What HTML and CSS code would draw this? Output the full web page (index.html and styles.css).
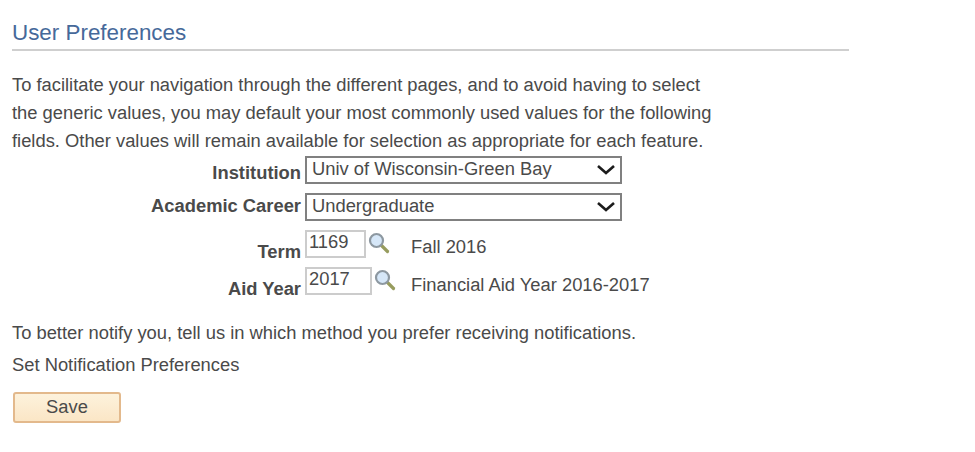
FILE: index.html
```html
<!DOCTYPE html>
<html lang="en">
<head>
<meta charset="utf-8">
<title>User Preferences</title>
<link rel="stylesheet" href="styles.css">
</head>
<body>
<main class="page">
  <h1 class="title">User Preferences</h1>
  <p class="intro">To facilitate your navigation through the different pages, and to avoid having to select<br>the generic values, you may default your most commonly used values for the following<br>fields. Other values will remain available for selection as appropriate for each feature.</p>
  <form class="form">
    <label class="label">Institution</label>
    <div class="select-wrap">
      <select class="select"><option>Univ of Wisconsin-Green Bay</option></select>
      <svg class="chevron" width="20" height="12" viewBox="0 0 20 12"><path d="M2 2l8 7 8-7" fill="none" stroke="#1c1c1c" stroke-width="2.600"/></svg>
    </div>
    <label class="label label-career">Academic Career</label>
    <div class="select-wrap">
      <select class="select"><option>Undergraduate</option></select>
      <svg class="chevron" width="20" height="12" viewBox="0 0 20 12"><path d="M2 2l8 7 8-7" fill="none" stroke="#1c1c1c" stroke-width="2.600"/></svg>
    </div>
    <label class="label label-low">Term</label>
    <div class="lookup">
      <div class="field">
        <input class="input input-term" value="1169">
        <svg class="mag" width="22" height="22" viewBox="0 0 22 22"><path d="M13.500 13.500l6 6" stroke="#979c5e" stroke-width="3.200" stroke-linecap="round"/><circle cx="8.500" cy="8.500" r="6.500" fill="#d6e7f8" stroke="#8d98a1" stroke-width="2.200"/></svg>
      </div>
      <span class="desc">Fall 2016</span>
    </div>
    <label class="label label-low">Aid Year</label>
    <div class="lookup">
      <div class="field">
        <input class="input input-aid" value="2017">
        <svg class="mag" width="22" height="22" viewBox="0 0 22 22"><path d="M13.500 13.500l6 6" stroke="#979c5e" stroke-width="3.200" stroke-linecap="round"/><circle cx="8.500" cy="8.500" r="6.500" fill="#d6e7f8" stroke="#8d98a1" stroke-width="2.200"/></svg>
      </div>
      <span class="desc">Financial Aid Year 2016-2017</span>
    </div>
  </form>
  <p class="note">To better notify you, tell us in which method you prefer receiving notifications.</p>
  <p class="link">Set Notification Preferences</p>
  <button class="save" type="button">Save</button>
</main>
</body>
</html>
```
FILE: styles.css
```css
* { box-sizing: border-box; }
html, body { margin: 0; background: #fff; }
body { font-family: "Liberation Sans", Arial, sans-serif; color: #4a4a4a; font-size: 18.35px; }
.page { padding: 19px 0 0 12px; height: 452px; overflow: hidden; }
.title {
  margin: 0; width: 837px; height: 32px; padding: 0;
  font-size: 22.4px; line-height: 28px; font-weight: 400; color: #46699a;
  border-bottom: 2px solid #cfcfcf;
}
.intro { margin: 20px 0 0; line-height: 28px; white-space: nowrap; }
.form {
  display: grid; grid-template-columns: 289px auto; justify-content: start;
  column-gap: 4px; margin-top: 1px;
}
.label { font-weight: 700; text-align: right; line-height: 28px; padding-top: 3px; white-space: nowrap; }
.label-career { padding-top: 0; line-height: 26px; }
.label-low { padding-top: 8px; }
.select-wrap { position: relative; width: 317px; height: 28px; margin-bottom: 9px; }
.select {
  appearance: none; width: 100%; height: 100%; padding: 0 0 3px 5px; margin: 0;
  border: 2px solid #808080; border-radius: 0; background: #fff;
  font: 18.35px "Liberation Sans", Arial, sans-serif; color: #4a4a4a;
}
.chevron { position: absolute; right: 6px; top: 8px; }
.lookup { display: flex; align-items: flex-start; height: 28px; margin-bottom: 9px; }
.field { display: flex; align-items: flex-start; width: 106px; flex: none; }
.input {
  height: 28px; padding: 0 0 4px 2px; margin: 0;
  border: 2px solid #cccccc; background: #fff;
  font: 18.35px "Liberation Sans", Arial, sans-serif; color: #4a4a4a;
}
.input-term { width: 61px; }
.input-aid { width: 67px; }
.mag { margin: 2px 0 0 2px; flex: none; }
.desc { margin-top: 3px; line-height: 28px; white-space: nowrap; }
.lookup:last-child .desc { margin-top: 4px; }
.note { margin: 15px 0 0; line-height: 28px; }
.link { margin: 4px 0 0; line-height: 28px; }
.save {
  display: block; width: 108px; height: 31px; margin: 13px 0 0 1px; padding: 0 0 1px;
  border: 2px solid #e3b98c; border-radius: 3px;
  background: linear-gradient(#fdf2dc, #fbe6c6);
  font: 18.35px "Liberation Sans", Arial, sans-serif; color: #4a4a4a;
}
```
